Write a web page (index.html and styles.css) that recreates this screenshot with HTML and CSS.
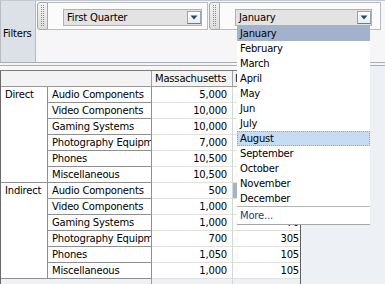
FILE: index.html
```html
<!DOCTYPE html>
<html>
<head>
<meta charset="utf-8">
<link rel="stylesheet" href="styles.css">
</head>
<body>
<div class="app">
  <div class="filters">
    <div class="filters-label">Filters</div>
    <div class="filter-items">
      <div class="filter-item first">
        <div class="grip"><span class="grip-dots"></span></div>
        <div class="filter-body">
          <div class="select">
            <span class="select-text">First Quarter</span>
            <span class="select-btn"><svg width="12" height="11" viewBox="0 0 12 11"><path d="M2.5 3.5h7l-3.5 4z" fill="#1d4a72"/></svg></span>
          </div>
        </div>
      </div>
      <div class="filter-item second">
        <div class="grip"><span class="grip-dots"></span></div>
        <div class="filter-body">
          <div class="select">
            <span class="select-text">January</span>
            <span class="select-btn"><svg width="12" height="11" viewBox="0 0 12 11"><path d="M2.5 3.5h7l-3.5 4z" fill="#1d4a72"/></svg></span>
            <ul class="menu">
              <li class="sel">January</li>
              <li>February</li>
              <li>March</li>
              <li>April</li>
              <li>May</li>
              <li>Jun</li>
              <li>July</li>
              <li class="focus">August</li>
              <li>September</li>
              <li>October</li>
              <li>November</li>
              <li>December</li>
              <li class="more">More...</li>
            </ul>
          </div>
        </div>
      </div>
    </div>
  </div>
  <div class="splitter"></div>
  <div class="content">
    <div class="grid-wrap">
      <div class="grid">
        <div class="hd corner"></div>
        <div class="hd">Massachusetts</div>
        <div class="hd last">I</div>

        <div class="rh group">Direct</div>
        <div class="rh">Audio Components</div><div class="v">5,000</div><div class="v last"></div>
        <div class="rh">Video Components</div><div class="v">10,000</div><div class="v last"></div>
        <div class="rh">Gaming Systems</div><div class="v">10,000</div><div class="v last"></div>
        <div class="rh">Photography Equipment</div><div class="v">7,000</div><div class="v last"></div>
        <div class="rh">Phones</div><div class="v">10,500</div><div class="v last"></div>
        <div class="rh">Miscellaneous</div><div class="v">10,500</div><div class="v last"></div>

        <div class="rh group">Indirect</div>
        <div class="rh">Audio Components</div><div class="v">500</div><div class="v last picked"></div>
        <div class="rh">Video Components</div><div class="v">1,000</div><div class="v last"></div>
        <div class="rh">Gaming Systems</div><div class="v">1,000</div><div class="v last">70</div>
        <div class="rh">Photography Equipment</div><div class="v">700</div><div class="v last">305</div>
        <div class="rh">Phones</div><div class="v">1,050</div><div class="v last">105</div>
        <div class="rh">Miscellaneous</div><div class="v">1,000</div><div class="v last">105</div>

        <div class="ft corner"></div>
        <div class="ft"></div>
        <div class="ft last"></div>
      </div>
    </div>
    <div class="side"></div>
  </div>
</div>
</body>
</html>
```
FILE: styles.css
```css
* { box-sizing: border-box; }
html, body { margin: 0; padding: 0; }
body {
  width: 385px;
  height: 284px;
  overflow: hidden;
  font-family: "DejaVu Sans", Verdana, sans-serif;
  font-size: 10px;
  letter-spacing: -0.2px;
  color: #000;
  background: #fff;
}
.app { display: flex; flex-direction: column; height: 284px; }

.filters {
  display: flex;
  height: 62px;
  flex: none;
  border-top: 1px solid #c3c8ce;
  background: #f6f6f8;
  position: relative;
  z-index: 2;
}
.filters-label {
  width: 36px;
  border-left: 1px solid #b8bdc4;
  border-right: 1px solid #b8bdc4;
  background: #dce1e7;
  display: flex;
  align-items: center;
  padding: 4px 0 0 2px;
}
.filter-items { display: flex; align-items: flex-start; gap: 1px; padding: 1px 0 0 1px; }
.filter-item { display: flex; height: 28px; }
.grip {
  width: 11px;
  border: 1px solid #a3a8ae;
  border-radius: 3px 0 0 3px;
  background: linear-gradient(#f4f4f4, #dcdcdc);
  display: flex;
  align-items: center;
  justify-content: center;
}
.grip-dots {
  width: 4px;
  height: 22px;
  background-image: radial-gradient(circle at 0.5px 0.5px, #8a8a8a 0.5px, transparent 0.6px);
  background-size: 2px 2px;
}
.filter-body {
  border: 1px solid #b8bcc2;
  border-left: none;
  background: #fbfbfb;
  padding: 6px 0 0 15px;
}
.first .filter-body { width: 160px; }
.second .filter-body { width: 161px; }

.select {
  position: relative;
  display: flex;
  align-items: center;
  height: 17px;
  border: 1px solid #b0b0b0;
  background: #e3e3e3;
  padding-left: 3px;
}
.first .select { width: 139px; }
.second .select { width: 137px; }
.select-text { flex: 1; line-height: 15px; }
.select-btn {
  width: 14px;
  height: 13px;
  border: 1px solid #9aa4b0;
  border-bottom-color: #6f7a86;
  background: linear-gradient(#ffffff, #e8ecf0);
  display: flex;
  align-items: center;
  justify-content: center;
}
.select-btn svg { display: block; }

.menu {
  position: absolute;
  top: 16px;
  left: 1px;
  width: 133px;
  margin: 0;
  padding: 0;
  list-style: none;
  background: #fff;
  border-bottom: 1px solid #a6a6a6;
  z-index: 5;
}
.menu li { height: 15px; line-height: 15px; padding-left: 3px; white-space: nowrap; }
.menu li.sel { background: #a3b2cc; }
.menu li.focus { background: #c6dcf5; outline: 1px dotted #8aa6c4; outline-offset: -1px; }
.menu li.more { height: 18px; line-height: 18px; border-top: 1px solid #b4b4b4; color: #1b3c7c; }

.splitter {
  height: 4px;
  flex: none;
  border-top: 1px solid #a9aeb5;
  border-bottom: 1px solid #a9aeb5;
  background: #f4f5f7;
}

.content { flex: 1; display: flex; min-height: 0; }
.grid-wrap {
  width: 301px;
  flex: none;
  border-right: 1px solid #5f5f5f;
  background: #f8f8f8;
  padding-top: 4px;
  overflow: hidden;
}
.side { flex: 1; background: #edf1f5; }

.grid {
  display: grid;
  grid-template-columns: 47px 104px 81px 67px;
  grid-auto-rows: 16px;
  border-top: 1px solid #7b7b7b;
  border-left: 1px solid #6a6a6a;
  background: #fff;
}
.grid > div {
  border-right: 1px solid #d6d6d6;
  border-bottom: 1px solid #e1e1e1;
  line-height: 15px;
  white-space: nowrap;
  overflow: hidden;
}
.grid > div.last { border-right: none; }
.hd {
  background: #f3f3f3;
  border-right-color: #a0a0a0 !important;
  border-bottom-color: #999 !important;
  padding-left: 3px;
}
.hd.last { padding-left: 2px; }
.hd.corner { grid-column: span 2; }
.rh {
  border-right-color: #8f8f8f !important;
  border-bottom-color: #8f8f8f !important;
  padding-left: 4px;
}
.rh.group { grid-row: span 6; }
.v { text-align: right; padding-right: 5px; }
.v.last { padding-right: 1px; }
.v.picked { background: #a4b3cc; }
.ft { background: #eef1f4; }
.ft.corner { grid-column: span 2; border-right-color: #9a9a9a !important; }
```
